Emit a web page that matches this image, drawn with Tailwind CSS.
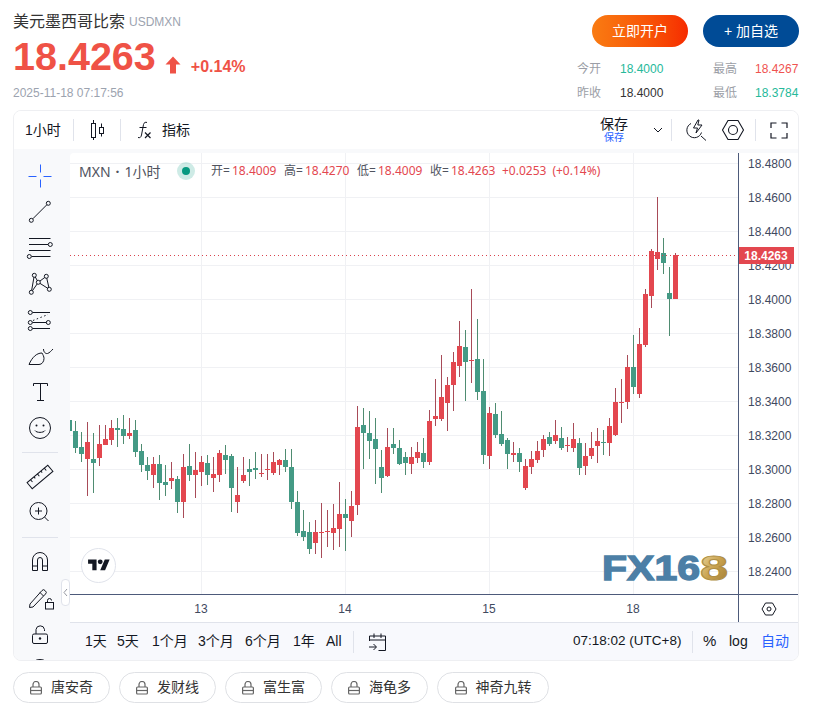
<!doctype html>
<html lang="zh">
<head>
<meta charset="utf-8">
<script src="https://cdn.jsdelivr.net/npm/@tailwindcss/browser@4"></script>
</head>
<body class="bg-white">
<div class="w-[816px] h-[712px] overflow-hidden px-[13px] pt-[12px] font-['Liberation_Sans','Noto_Sans_CJK_SC',sans-serif] text-[#131722]">
  <!-- header -->
  <div class="h-[98px] flex justify-between w-[786px]">
    <div>
      <div class="flex items-center h-[20px]">
        <span class="text-[16px] leading-[20px] text-[#333]">美元墨西哥比索</span>
        <span class="ml-[4px] text-[12px] text-[#9ca3af]">USDMXN</span>
      </div>
      <div class="flex items-center h-[46px] mt-[1px]">
        <span class="text-[39.500px] leading-[46px] font-bold text-[#ef5246]">18.4263</span>
        <svg class="ml-[9px] mt-[18px]" width="16" height="18" viewBox="0 0 16 19" preserveAspectRatio="none"><path d="M8 0.500L15.500 9H11V18.500H5V9H0.500Z" fill="#ef5246"/></svg>
        <span class="ml-[10px] mt-[22px] text-[16px] font-bold text-[#ef5246]">+0.14%</span>
      </div>
      <div class="mt-[6px] text-[12px] leading-[16px] text-[#9ca3af]">2025-11-18 07:17:56</div>
    </div>
    <div class="w-[222px]">
      <div class="flex justify-end gap-[15px] mt-[3px]">
        <div class="w-[96px] h-[32px] rounded-full bg-gradient-to-r from-[#f97b12] to-[#f62a00] text-white text-[14px] flex items-center justify-center">立即开户</div>
        <div class="w-[96px] h-[32px] rounded-full bg-[#004b96] text-white text-[14px] flex items-center justify-center">+ 加自选</div>
      </div>
      <div class="grid grid-cols-[43px_93px_42px_44px] mt-[10px] text-[12px] leading-[24px]">
        <span class="text-[#9b9ea6]">今开</span><span class="text-[#26b99a]">18.4000</span><span class="text-[#9b9ea6]">最高</span><span class="text-[#ef5350]">18.4267</span>
        <span class="text-[#9b9ea6]">昨收</span><span class="text-[#333]">18.4000</span><span class="text-[#9b9ea6]">最低</span><span class="text-[#26b99a]">18.3784</span>
      </div>
    </div>
  </div>

  <!-- chart card -->
  <div class="w-[786px] h-[551px] border border-[#eeeff2] rounded-[8px] overflow-hidden flex flex-col">
    <!-- top toolbar -->
    <div class="h-[38px] flex items-center bg-white text-[14px] pl-[11px]">
      <span class="w-[34px] whitespace-nowrap">1小时</span>
      <span class="ml-[14px] w-px h-[22px] bg-[#e0e3eb]"></span>
      <svg class="ml-[13px]" width="20" height="22" viewBox="0 0 20 22" fill="none" stroke="#131722"><path d="M6.500 1v3M6.500 18.500V21M14.500 4.500v3.500M14.500 15v2.500"/><rect x="4.500" y="4.500" width="4" height="14"/><rect x="12.500" y="8.500" width="4" height="6"/></svg>
      <span class="ml-[13px] w-px h-[22px] bg-[#e0e3eb]"></span>
      <svg class="ml-[15px]" width="16" height="18" viewBox="0 0 16 18" fill="none" stroke="#131722"><path d="M2 16.500c2 .6 3-.2 3.500-2.500L7.500 3.500C8 1.500 9.500.8 11 1.500M3.500 6.500h7"/><path d="M9 11.500l5.500 5.500M14.500 11.500L9 17" stroke-width="1.200"/></svg>
      <span class="ml-[10px]">指标</span>
      <div class="ml-[410px] w-[28px] flex flex-col items-center leading-none">
        <span class="text-[14px] leading-[15px]">保存</span>
        <span class="text-[10px] leading-[11px] text-[#2962ff]">保存</span>
      </div>
      <svg class="ml-[25px]" width="10" height="6" viewBox="0 0 10 6" fill="none" stroke="#131722"><path d="M1 1l4 4 4-4"/></svg>
      <span class="ml-[8px] w-px h-[22px] bg-[#e0e3eb]"></span>
      <svg class="ml-[12px]" width="24" height="24" viewBox="0 0 24 24" fill="none" stroke="#131722"><path d="M7 5.500a7.500 7.500 0 1 0 10.500 9M17 18l5 4.500M14 2L9.500 10h4L12 15l6-8h-4.200L15 2z"/></svg>
      <svg class="ml-[13px]" width="24" height="22" viewBox="0 0 24 22" fill="none" stroke="#131722" stroke-width="1.100"><path d="M7 1.500h10l5.500 9.500-5.500 9.500H7L1.500 11z"/><circle cx="12" cy="11" r="4.500"/></svg>
      <span class="ml-[10px] w-px h-[22px] bg-[#e0e3eb]"></span>
      <svg class="ml-[14px]" width="18" height="17" viewBox="0 0 18 17" fill="none" stroke="#131722" stroke-width="1.200"><path d="M1 6V1h5.500M11.500 1H17v5M17 11v5h-5.500M6.500 16H1v-5"/></svg>
    </div>

    <!-- body -->
    <div class="flex-1 flex bg-[#f8f9fb] pt-[4px] min-h-0">
      <!-- left toolbar -->
      <div class="w-[56px] h-[507px] shrink-0 flex flex-col items-center pt-[5px] pr-[4px] overflow-hidden *:shrink-0">
        <div class="h-[36px] flex items-center"><svg width="28" height="28" viewBox="0 0 28 28" fill="none" stroke="#2962ff"><path d="M2.500 14.500h8M17.500 14.500h8M14.500 2.500v8M14.500 17.500v8"/></svg></div>
        <div class="h-[36px] flex items-center"><svg width="28" height="28" viewBox="0 0 28 28" fill="none" stroke="#131722"><path d="M6.800 20.800L20.800 6.800"/><circle cx="5.300" cy="22.300" r="2"/><circle cx="22.300" cy="5.300" r="2"/></svg></div>
        <div class="h-[36px] flex items-center"><svg width="28" height="28" viewBox="0 0 28 28" fill="none" stroke="#131722"><path d="M3 4.500h21.500M3 10.500h19M3 16.500h21.500M5.500 22.500h19"/><circle cx="24.300" cy="10.500" r="2" fill="#f8f9fb"/><circle cx="3.300" cy="22.500" r="2" fill="#f8f9fb"/></svg></div>
        <div class="h-[36px] flex items-center"><svg width="28" height="28" viewBox="0 0 28 28" fill="none" stroke="#131722"><path d="M5.300 22.300L8.300 5.300L12.300 12.300L20.300 6.300L23.300 19.300L12.300 12.300L5.300 22.300"/><circle cx="5.300" cy="22.300" r="2" fill="#f8f9fb"/><circle cx="8.300" cy="5.300" r="2" fill="#f8f9fb"/><circle cx="12.300" cy="12.300" r="2" fill="#f8f9fb"/><circle cx="20.300" cy="6.300" r="2" fill="#f8f9fb"/><circle cx="23.300" cy="19.300" r="2" fill="#f8f9fb"/></svg></div>
        <div class="h-[36px] flex items-center"><svg width="28" height="28" viewBox="0 0 28 28" fill="none" stroke="#131722"><path d="M6.500 6.500H24M6.500 16.500h14M6.500 22.500H24"/><path d="M7 14.500L22 8.500" stroke-dasharray="1.500 2.500"/><circle cx="4.300" cy="6.500" r="2"/><circle cx="4.300" cy="16.500" r="2"/><circle cx="22.300" cy="16.500" r="2"/><circle cx="4.300" cy="22.500" r="2"/></svg></div>
        <div class="h-[36px] flex items-center"><svg width="28" height="28" viewBox="0 0 28 28" fill="none" stroke="#131722"><path d="M3 22.500h10c3 0 5-3 5-6 0-2-1-3.500-2-5.500-5.500 0-10 4.500-13 11.500z"/><path d="M17.500 7c0 3 2 5 4 4.500 2-.5 4-3 5.500-4.500"/></svg></div>
        <div class="h-[36px] flex items-center"><svg width="28" height="28" viewBox="0 0 28 28" fill="none" stroke="#131722"><path d="M7.500 8V5.500h14V8M14.500 5.500v17M11 22.500h7"/></svg></div>
        <div class="h-[36px] flex items-center"><svg width="28" height="28" viewBox="0 0 28 28" fill="none" stroke="#131722"><circle cx="14" cy="14" r="10.500"/><path d="M9 16.500c1.500 2.500 8.500 2.500 10 0"/><circle cx="10.500" cy="11.500" r="1" fill="#131722" stroke="none"/><circle cx="17.500" cy="11.500" r="1" fill="#131722" stroke="none"/></svg></div>
        <div class="h-[12px] flex items-center"><span class="block w-[36px] h-px bg-[#e0e3eb]"></span></div>
        <div class="h-[36px] flex items-center"><svg width="28" height="28" viewBox="0 0 28 28" fill="none" stroke="#131722"><g transform="rotate(-40 14 15)"><rect x="0.500" y="11" width="27" height="8"/><path d="M5 11v3M9.500 11v2M14 11v3M18.500 11v2M23 11v3"/></g></svg></div>
        <div class="h-[36px] flex items-center"><svg width="28" height="28" viewBox="0 0 28 28" fill="none" stroke="#131722"><circle cx="12.500" cy="13" r="8.500"/><path d="M18.500 19l4 4M12.500 9.500v7M9 13h7"/></svg></div>
        <div class="h-[14px] flex items-center"><span class="block w-[36px] h-px bg-[#e0e3eb]"></span></div>
        <div class="h-[36px] flex items-center"><svg width="28" height="28" viewBox="0 0 28 28" fill="none" stroke="#131722"><path d="M6.500 22.500V12a7.500 7.500 0 0 1 15 0v10.500h-5V12a2.500 2.500 0 0 0-5 0v10.500zM6.500 18h5M16.500 18h5"/></svg></div>
        <div class="h-[36px] flex items-center"><svg width="28" height="28" viewBox="0 0 28 28" fill="none" stroke="#131722"><path d="M7 23L3.500 23.500 4 20 16 6.500a2 2 0 0 1 3 0l.5.500a2 2 0 0 1 0 3L7 23zM14 8.500l3.500 3.500"/><rect x="19.500" y="18.500" width="8" height="6.500"/><path d="M21.500 18.500v-2a2 2 0 0 1 4 0"/></svg></div>
        <div class="h-[36px] flex items-center"><svg width="28" height="28" viewBox="0 0 28 28" fill="none" stroke="#131722"><rect x="6.500" y="14" width="15" height="9.500" rx="1.500"/><path d="M10 14V9.500a4.300 4.300 0 0 1 8.500 0V11"/><circle cx="14" cy="18.500" r="1.200" fill="#131722" stroke="none"/></svg></div>
        <div class="h-[36px] flex items-center"><svg width="28" height="28" viewBox="0 0 28 28" fill="none" stroke="#131722"><path d="M9 5.500a5 2 0 0 1 10 0"/></svg></div>
      </div>

      <!-- right column -->
      <div class="w-[728px] flex flex-col relative">
        <button class="absolute left-[-9px] top-[426px] z-10 w-[9px] h-[27px] bg-white border border-[#e0e3eb] rounded-[4px] flex items-center justify-center"><svg width="5" height="9" viewBox="0 0 5 9" fill="none" stroke="#9598a1"><path d="M4 1L1 4.500 4 8"/></svg></button>
        <div class="flex h-[441px] bg-white rounded-tl-[4px]">
          <!-- plot -->
          <div class="relative w-[668px] overflow-hidden">
            <svg class="block" width="668" height="441" viewBox="210 459 2004 1323" shape-rendering="crispEdges">
              <path fill="none" stroke="#f0f1f4" stroke-width="3" d="M210 490.500H2214M210 592.500H2214M210 694.500H2214M210 796.500H2214M210 898.500H2214M210 1000.500H2214M210 1102.500H2214M210 1204.500H2214M210 1306.500H2214M210 1408.500H2214M210 1510.500H2214M210 1612.500H2214M210 1714.500H2214M604.500 459V1782M1036.500 459V1782M1468.500 459V1782M1900.500 459V1782"/>
              <g transform="translate(210 1140)">
                <path fill="none" stroke="#4f8c71" stroke-width="3" d="M16.500 123V218M34.500 156V246M70.500 159V339M142.500 114V201M160.500 105V192M196.500 120V231M214.500 192V276M232.500 231V300M268.500 225V360M286.500 255V348M322.500 288V399M358.500 192V303M412.500 225V315M466.500 195V282M484.500 222V396M538.500 237V318M556.500 216V297M646.500 207V276M664.500 207V387M682.500 333V468"/>
                <path fill="none" stroke="#a84b58" stroke-width="3" d="M52.500 126V348M88.500 135V258M106.500 135V195M124.500 120V195M178.500 114V177M250.500 231V324M304.500 246V327M340.500 222V414M376.500 216V354M394.500 228V318M430.500 231V336M448.500 210V306M502.500 261V399M520.500 231V309M574.500 222V291M592.500 222V300M610.500 216V285M628.500 237V285"/>
                <path fill="#449a85" d="M-9 120h15V153h-15zM9 153h15V204h-15zM27 201h15V222h-15zM63 237h15V249h-15zM135 144h15V150h-15zM153 147h15V168h-15zM189 150h15V216h-15zM207 213h15V255h-15zM225 255h15V273h-15zM261 252h15V309h-15zM279 306h15V315h-15zM315 297h15V366h-15zM351 258h15V285h-15zM405 249h15V285h-15zM459 225h15V240h-15zM477 228h15V324h-15zM531 267h15V276h-15zM549 264h15V270h-15zM639 240h15V261h-15zM657 261h15V366h-15zM675 366h15V459h-15z"/>
                <path fill="#e3474f" d="M45 186h15V237h-15zM81 192h15V234h-15zM99 177h15V195h-15zM117 144h15V180h-15zM171 159h15V168h-15zM243 252h15V285h-15zM297 294h15V303h-15zM333 261h15V366h-15zM369 270h15V285h-15zM387 246h15V276h-15zM423 282h15V294h-15zM441 219h15V285h-15zM495 345h15V366h-15zM513 285h15V303h-15zM567 279h15V282h-15zM585 267h15V270h-15zM603 246h15V279h-15zM621 240h15V255h-15z"/>
              </g>
              <g transform="translate(870 1140)">
                <path fill="none" stroke="#4f8c71" stroke-width="3" d="M40.500 390V483M58.500 426V522M166.500 357V513M220.500 84V267M238.500 93V237M256.500 114V312M274.500 210V339M310.500 144V222M328.500 180V255M346.500 216V285M400.500 174V264"/>
                <path fill="none" stroke="#a84b58" stroke-width="3" d="M76.500 420V522M94.500 369V534M112.500 390V501M130.500 372V510M148.500 306V501M184.500 333V471M202.500 78V405M292.500 144V291M364.500 201V282M382.500 186V249M418.500 90V255"/>
                <path fill="#449a85" d="M33 453h15V471h-15zM51 456h15V507h-15zM159 402h15V414h-15zM213 135h15V159h-15zM231 159h15V183h-15zM249 177h15V207h-15zM267 261h15V294h-15zM303 192h15V204h-15zM321 204h15V252h-15zM339 231h15V249h-15zM393 219h15V246h-15z"/>
                <path fill="#e3474f" d="M69 456h15V489h-15zM87 456h15V459h-15zM105 453h15V456h-15zM123 444h15V459h-15zM141 402h15V447h-15zM177 378h15V423h-15zM195 141h15V375h-15zM285 201h15V288h-15zM357 231h15V252h-15zM375 216h15V234h-15zM411 123h15V246h-15z"/>
              </g>
              <g transform="translate(1200 840)">
                <path fill="none" stroke="#4f8c71" stroke-width="3" d="M196.500 150V363M232.500 117V360M250.500 237V552M286.500 369V474"/>
                <path fill="none" stroke="#a84b58" stroke-width="3" d="M106.500 297V438M124.500 225V423M142.500 291V453M160.500 216V393M178.500 123V291M214.500 27V309M268.500 381V567"/>
                <path fill="#449a85" d="M189 201h15V246h-15zM225 237h15V336h-15zM243 333h15V525h-15zM279 402h15V465h-15z"/>
                <path fill="#e3474f" d="M99 408h15V417h-15zM117 351h15V417h-15zM135 315h15V369h-15zM153 246h15V315h-15zM171 198h15V258h-15zM207 240h15V243h-15zM261 399h15V528h-15z"/>
              </g>
              <g transform="translate(1500 570)">
                <path fill="none" stroke="#4f8c71" stroke-width="3" d="M4.500 663V768M22.500 744V837M58.500 774V846M148.500 726V768M184.500 711V780M238.500 744V855M310.500 720V795M400.500 435V612M490.500 144V252M508.500 231V438"/>
                <path fill="none" stroke="#a84b58" stroke-width="3" d="M40.500 756V816M76.500 807V900M94.500 783V852M112.500 753V819M130.500 735V801M166.500 690V762M202.500 741V786M220.500 699V786M256.500 759V855M274.500 726V807M292.500 714V819M328.500 684V798M346.500 594V738M364.500 567V699M382.500 495V657M418.500 414V624M436.500 297V471M454.500 177V354M472.500 21V240M526.500 189V327"/>
                <path fill="#449a85" d="M-3 732h15V762h-15zM15 750h15V792h-15zM51 789h15V816h-15zM141 741h15V762h-15zM177 744h15V774h-15zM231 759h15V834h-15zM303 756h15V759h-15zM393 531h15V591h-15zM483 189h15V219h-15zM501 309h15V327h-15z"/>
                <path fill="#e3474f" d="M33 789h15V795h-15zM69 828h15V894h-15zM87 807h15V831h-15zM105 783h15V810h-15zM123 747h15V780h-15zM159 735h15V753h-15zM195 765h15V768h-15zM213 747h15V774h-15zM249 798h15V828h-15zM267 774h15V798h-15zM285 753h15V768h-15zM321 708h15V759h-15zM339 636h15V735h-15zM357 636h15V639h-15zM375 531h15V636h-15zM411 462h15V612h-15zM429 312h15V465h-15zM447 183h15V318h-15zM465 186h15V207h-15zM519 195h15V327h-15z"/>
              </g>
              <path fill="none" stroke="#d9434e" stroke-width="3" stroke-dasharray="3 9" d="M210 766.500H2214"/>
            </svg>
            <!-- legend -->
            <div class="absolute left-[9px] top-[8px] h-[20px] flex items-center text-[#50535e] whitespace-nowrap font-['Noto_Sans','Noto_Sans_CJK_SC',sans-serif]">
              <span class="text-[14px] w-[82px] flex"><span>MXN</span><span class="mx-[5px] font-bold">·</span><span>1小时</span></span>
              <span class="ml-[16px] w-[18px] h-[18px] rounded-full bg-[#08998133] flex items-center justify-center"><span class="block w-[8px] h-[8px] rounded-full bg-[#089981]"></span></span>
              <div class="ml-[16px] text-[12px] flex">
                <span class="w-[21px]">开=</span><span class="w-[45px] text-[#e3474f]">18.4009</span>
                <span class="ml-[7px] w-[21px]">高=</span><span class="w-[45px] text-[#e3474f]">18.4270</span>
                <span class="ml-[7px] w-[21px]">低=</span><span class="w-[45px] text-[#e3474f]">18.4009</span>
                <span class="ml-[7px] w-[21px]">收=</span><span class="w-[45px] text-[#e3474f]">18.4263</span>
                <span class="ml-[6px] text-[#e3474f]">+0.0253</span><span class="ml-[6px] text-[#e3474f]">(+0.14%)</span>
              </div>
            </div>
            <!-- tv logo -->
            <div class="absolute left-[11px] top-[395px] w-[35px] h-[35px] rounded-full bg-white border border-[#e0e3eb] flex items-center justify-center">
              <svg width="22" height="17" viewBox="0 0 36 28" fill="#131722"><path d="M14 22H7V11H0V4h14v18zM28 22h-8l7.500-18h8L28 22z"/><circle cx="20" cy="8" r="4"/></svg>
            </div>
            <!-- watermark -->
            <svg class="absolute left-[532px] top-[401px] overflow-visible" width="128" height="28" viewBox="0 0 128 28">
              <defs><linearGradient id="gold" x1="0" y1="0" x2="1" y2="1"><stop offset="0" stop-color="#f0dfa8"/><stop offset=".5" stop-color="#c9a24f"/><stop offset="1" stop-color="#9c7a35"/></linearGradient></defs>
              <text x="0" y="26" font-family="Liberation Sans" font-weight="700" font-size="35" textLength="98" lengthAdjust="spacingAndGlyphs" fill="#4c7fa6" stroke="#4c7fa6" stroke-width="1.400">FX16</text>
              <text x="98" y="26" font-family="Liberation Sans" font-weight="700" font-size="35" textLength="28" lengthAdjust="spacingAndGlyphs" fill="url(#gold)" stroke="#b08f45" stroke-width="1">8</text>
            </svg>
          </div>
          <!-- price axis -->
          <div class="relative w-[60px] border-l border-[#4d5a7a] text-[12px] text-[#3f4a5f] pl-[9px] overflow-hidden">
            <div class="-mt-[6px]">
              <div class="h-[34px] flex items-center">18.4800</div>
              <div class="h-[34px] flex items-center">18.4600</div>
              <div class="h-[34px] flex items-center">18.4400</div>
              <div class="h-[34px] flex items-center">18.4200</div>
              <div class="h-[34px] flex items-center">18.4000</div>
              <div class="h-[34px] flex items-center">18.3800</div>
              <div class="h-[34px] flex items-center">18.3600</div>
              <div class="h-[34px] flex items-center">18.3400</div>
              <div class="h-[34px] flex items-center">18.3200</div>
              <div class="h-[34px] flex items-center">18.3000</div>
              <div class="h-[34px] flex items-center">18.2800</div>
              <div class="h-[34px] flex items-center">18.2600</div>
              <div class="h-[34px] flex items-center">18.2400</div>
            </div>
            <div class="absolute left-[-1px] top-[94px] w-[56px] h-[17px] bg-[#e3474f] text-white font-bold flex items-center justify-center">18.4263</div>
          </div>
        </div>
        <!-- time axis -->
        <div class="flex h-[28px] bg-white border-t border-[#4d5a7a] text-[12px] text-[#3f4a5f]">
          <div class="w-[668px] pl-[59px] flex items-center">
            <span class="w-[144px] text-center">13</span><span class="w-[144px] text-center">14</span><span class="w-[144px] text-center">15</span><span class="w-[144px] text-center">18</span>
          </div>
          <div class="w-[60px] border-l border-[#4d5a7a] flex items-center justify-center">
            <svg width="16" height="14" viewBox="0 0 16 14" fill="none" stroke="#131722"><path d="M4.500 1h7L15 7l-3.500 6h-7L1 7z"/><circle cx="8" cy="7" r="2"/></svg>
          </div>
        </div>
        <!-- bottom bar -->
        <div class="h-[38px] border-t border-[#e0e3eb] bg-[#f8f9fd] flex items-center text-[14px] text-[#131722] pl-[15px]">
          <span class="w-[32px]">1天</span><span class="w-[35px]">5天</span><span class="w-[46px]">1个月</span><span class="w-[47px]">3个月</span><span class="w-[48px]">6个月</span><span class="w-[33px]">1年</span><span class="w-[27px]">All</span>
          <span class="w-px h-[22px] bg-[#e0e3eb]"></span>
          <svg class="ml-[14px]" width="20" height="20" viewBox="0 0 20 20" fill="none" stroke="#131722"><path d="M1.500 9V4h16v14.500h-7M1.500 8h16M6 1.500V6M13 1.500V6M1 15h7M5.500 12l3 3-3 3"/></svg>
          <span class="ml-[185px] w-[109px] whitespace-nowrap text-[13.500px]">07:18:02 (UTC+8)</span>
          <span class="ml-[10px] w-px h-[22px] bg-[#e0e3eb]"></span>
          <span class="ml-[10px] w-[14px] text-[15px]">%</span>
          <span class="ml-[12px] w-[20px]">log</span>
          <span class="ml-[12px] text-[#2962ff]">自动</span>
        </div>
      </div>
    </div>
  </div>

  <!-- pills -->
  <div class="flex gap-[9px] mt-[11px] text-[14px] text-[#333]">
    <div class="h-[31px] w-[97px] rounded-full border border-[#dfe1e5] flex items-center justify-center gap-[9px]"><svg width="12" height="14" viewBox="0 0 12 14" fill="none" stroke="#666" stroke-width="1.200"><path d="M3 6V3.500a3 3 0 0 1 6 0V6"/><rect x=".6" y="6" width="10.800" height="7" rx="1"/><path d="M1 9.500h10"/></svg><span>唐安奇</span></div>
    <div class="h-[31px] w-[97px] rounded-full border border-[#dfe1e5] flex items-center justify-center gap-[9px]"><svg width="12" height="14" viewBox="0 0 12 14" fill="none" stroke="#666" stroke-width="1.200"><path d="M3 6V3.500a3 3 0 0 1 6 0V6"/><rect x=".6" y="6" width="10.800" height="7" rx="1"/><path d="M1 9.500h10"/></svg><span>发财线</span></div>
    <div class="h-[31px] w-[97px] rounded-full border border-[#dfe1e5] flex items-center justify-center gap-[9px]"><svg width="12" height="14" viewBox="0 0 12 14" fill="none" stroke="#666" stroke-width="1.200"><path d="M3 6V3.500a3 3 0 0 1 6 0V6"/><rect x=".6" y="6" width="10.800" height="7" rx="1"/><path d="M1 9.500h10"/></svg><span>富生富</span></div>
    <div class="h-[31px] w-[97px] rounded-full border border-[#dfe1e5] flex items-center justify-center gap-[9px]"><svg width="12" height="14" viewBox="0 0 12 14" fill="none" stroke="#666" stroke-width="1.200"><path d="M3 6V3.500a3 3 0 0 1 6 0V6"/><rect x=".6" y="6" width="10.800" height="7" rx="1"/><path d="M1 9.500h10"/></svg><span>海龟多</span></div>
    <div class="h-[31px] w-[112px] rounded-full border border-[#dfe1e5] flex items-center justify-center gap-[9px]"><svg width="12" height="14" viewBox="0 0 12 14" fill="none" stroke="#666" stroke-width="1.200"><path d="M3 6V3.500a3 3 0 0 1 6 0V6"/><rect x=".6" y="6" width="10.800" height="7" rx="1"/><path d="M1 9.500h10"/></svg><span>神奇九转</span></div>
  </div>
</div>
</body>
</html>
